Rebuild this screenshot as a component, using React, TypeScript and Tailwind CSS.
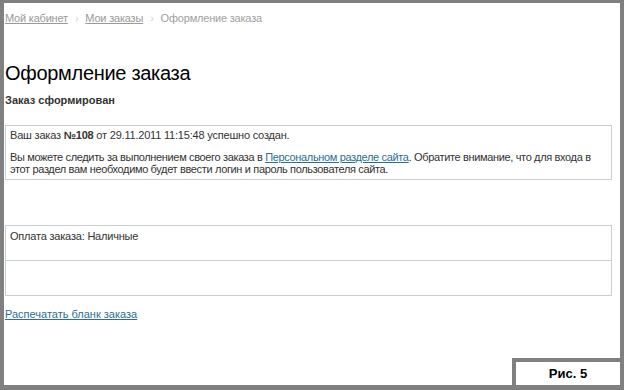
import React from "react";

export default function App() {
  const font = { fontFamily: '"Liberation Sans", Arial, sans-serif' };
  return (
    <div
      className="w-[624px] h-[390px] bg-white border-[#808080] border-l-4 border-t-[3px] border-r-4 border-b-[5px] relative overflow-hidden"
      style={font}
    >
      <div className="pl-[1px] pt-[7px]">
        <div className="flex items-center text-[11px] leading-[16px] tracking-[-0.2px] text-[#999]">
          <a href="#" className="underline text-[#999]">Мой кабинет</a>
          <span className="mx-[7px] text-[#d0d0d0]">›</span>
          <a href="#" className="underline text-[#999]">Мои заказы</a>
          <span className="mx-[7px] text-[#d0d0d0]">›</span>
          <span className="text-[#a0a0a0]">Оформление заказа</span>
        </div>
        <h1 className="mt-[35px] text-[20px] leading-[24px] tracking-[-0.3px] text-black font-normal">
          Оформление заказа
        </h1>
        <div className="mt-[8px] text-[11px] leading-[14px] font-bold text-[#333]">
          Заказ сформирован
        </div>
        <div className="mt-[18px] w-[607px] border border-[#c5cfd4] pl-[4px] pr-[2px] pt-[3px] pb-[4px] text-[11px] leading-[12px] tracking-[-0.2px] text-[#333]">
          <p>
            Ваш заказ <b>№108</b> от 29.11.2011 11:15:48 успешно создан.
          </p>
          <p className="mt-[10px] tracking-[-0.35px]">
            Вы можете следить за выполнением своего заказа в{" "}
            <a href="#" className="underline text-[#2a6e98]">Персональном разделе сайта</a>. Обратите внимание, что для входа в
            <br />
            этот раздел вам необходимо будет ввести логин и пароль пользователя сайта.
          </p>
        </div>
        <div className="mt-[45px] w-[607px] border border-[#c5cfd4] text-[11px] leading-[12px] tracking-[-0.2px] text-[#333]">
          <div className="h-[34px] px-[4px] pt-[4px]">Оплата заказа: Наличные</div>
          <div className="h-[35px] border-t border-[#c5cfd4]"></div>
        </div>
        <div className="mt-[12px] text-[11px] leading-[12px]">
          <a href="#" className="underline text-[#2a6e98]">Распечатать бланк заказа</a>
        </div>
      </div>
      <div className="absolute right-0 bottom-0 w-[108px] h-[27px] border-l-4 border-t-4 border-[#808080] bg-white flex items-center justify-center text-[13px] font-bold text-black">
        Рис. 5
      </div>
    </div>
  );
}
